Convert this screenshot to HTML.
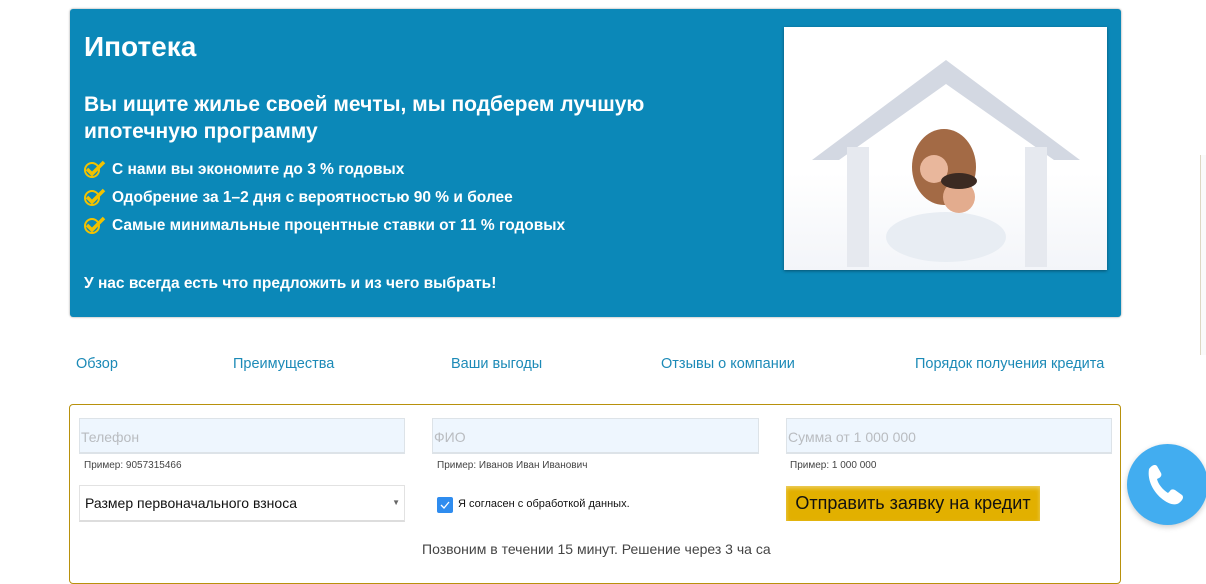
<!DOCTYPE html>
<html><head><meta charset="utf-8"><style>
body{margin:0;width:1206px;height:568px;overflow:hidden;background:#fff;font-family:"Liberation Sans","DejaVu Sans",sans-serif;position:relative}
.a{position:absolute}
.panel{left:70px;top:9px;width:1051px;height:308px;background:#0b88b8;border-radius:3px;box-shadow:0 0 2px #999}
.w{color:#fff;font-weight:bold}
.li{left:84px;font-size:15.5px;color:#fff;font-weight:bold;white-space:nowrap}
.li svg{vertical-align:-4px;margin-right:6px}
.nav{top:356px;font-size:14.5px;color:#1c8ab7}
.inp{height:36px;background:#eef6fe;border:1px solid #dde3e8;border-bottom:2px solid #dde3e8;box-sizing:border-box;color:#b9bcc0;font-size:14px;line-height:36px;padding-left:1px}
.ex{font-size:10px;color:#444}
</style></head><body>
<div class="a panel"></div>
<div class="a w" style="left:84px;top:31px;font-size:28px">Ипотека</div>
<div class="a w" style="left:84px;top:91px;font-size:21px;line-height:27px">Вы ищите жилье своей мечты, мы подберем лучшую<br>ипотечную программу</div>
<div class="a li" style="top:160px"><svg width="22" height="18" viewBox="0 0 22 18"><circle cx="8" cy="10" r="7" fill="none" stroke="#f2c200" stroke-width="2"/><path d="M3 9l5 5L20 2" fill="none" stroke="#f2c200" stroke-width="3.5"/></svg>С нами вы экономите до 3 % годовых</div>
<div class="a li" style="top:188px"><svg width="22" height="18" viewBox="0 0 22 18"><circle cx="8" cy="10" r="7" fill="none" stroke="#f2c200" stroke-width="2"/><path d="M3 9l5 5L20 2" fill="none" stroke="#f2c200" stroke-width="3.5"/></svg>Одобрение за 1–2 дня с вероятностью 90 % и более</div>
<div class="a li" style="top:216px"><svg width="22" height="18" viewBox="0 0 22 18"><circle cx="8" cy="10" r="7" fill="none" stroke="#f2c200" stroke-width="2"/><path d="M3 9l5 5L20 2" fill="none" stroke="#f2c200" stroke-width="3.5"/></svg>Самые минимальные процентные ставки от 11 % годовых</div>
<div class="a li" style="top:275px">У нас всегда есть что предложить и из чего выбрать!</div>
<div class="a" style="left:784px;top:27px;width:323px;height:243px;background:linear-gradient(#fff 60%,#f3f5f9);box-shadow:0 1px 3px rgba(0,0,0,.4)">
<svg width="323" height="243" viewBox="0 0 323 243"><path d="M28 133L162 33L296 133H270L162 57L55 133Z" fill="#d3d8e2"/><rect x="63" y="120" width="22" height="120" fill="#e6e9ef"/><rect x="241" y="120" width="22" height="120" fill="#e6e9ef"/><ellipse cx="160" cy="140" rx="32" ry="38" fill="#a36a45"/><ellipse cx="162" cy="210" rx="60" ry="25" fill="#e8edf3"/><circle cx="150" cy="142" r="14" fill="#e9b79c"/><circle cx="175" cy="170" r="16" fill="#e3ac8e"/><ellipse cx="175" cy="154" rx="18" ry="8" fill="#3b2a22"/></svg></div>
<div class="a" style="left:1200px;top:155px;width:6px;height:200px;border-left:1px solid #ddd8c4;background:#fafafa"></div>
<div class="a nav" style="left:76px">Обзор</div>
<div class="a nav" style="left:233px">Преимущества</div>
<div class="a nav" style="left:451px">Ваши выгоды</div>
<div class="a nav" style="left:661px">Отзывы о компании</div>
<div class="a nav" style="left:915px">Порядок получения кредита</div>
<div class="a" style="left:69px;top:404px;width:1052px;height:180px;border:1px solid #b8910c;border-radius:4px;box-sizing:border-box"></div>
<div class="a inp" style="left:79px;top:418px;width:326px">Телефон</div>
<div class="a inp" style="left:432px;top:418px;width:327px">ФИО</div>
<div class="a inp" style="left:786px;top:418px;width:326px">Сумма от 1 000 000</div>
<div class="a ex" style="left:84px;top:460px">Пример: 9057315466</div>
<div class="a ex" style="left:437px;top:460px">Пример: Иванов Иван Иванович</div>
<div class="a ex" style="left:790px;top:460px">Пример: 1 000 000</div>
<div class="a" style="left:79px;top:485px;width:326px;height:37px;border:1px solid #e2e2e2;border-bottom:2px solid #ddd;box-sizing:border-box;font-size:14px;line-height:34px;padding-left:5px;color:#111">Размер первоначального взноса<span style="position:absolute;right:4px;top:0;font-size:8px;color:#666">▼</span></div>
<div class="a" style="left:437px;top:497px;width:16px;height:16px;background:#2f8cef;border-radius:2px"><svg width="16" height="16"><path d="M4 8l3 3 5-6" fill="none" stroke="#fff" stroke-width="1.3"/></svg></div>
<div class="a" style="left:458px;top:498px;font-size:11px;color:#111">Я согласен с обработкой данных.</div>
<div class="a" style="left:786px;top:486px;width:254px;height:35px;background:#e2b000;box-shadow:inset 0 2px 4px rgba(255,255,255,.4);font-size:18px;line-height:35px;text-align:center;color:#111">Отправить заявку на кредит</div>
<div class="a" style="left:422px;top:541px;font-size:14px;color:#444">Позвоним в течении 15 минут. Решение через 3 ча са</div>
<div class="a" style="left:1127px;top:444px;width:81px;height:81px;border-radius:50%;background:#42adf0;box-shadow:0 2px 6px rgba(0,0,0,.2)">
<svg width="81" height="81" viewBox="0 0 81 81"><path d="M22 25c3-4 6-5 8-3l4 7c1 2 0 4-2 5l-2 1c1 5 6 11 11 14l2-2c1-2 3-2 5-1l7 5c2 2 1 5-3 8-4 3-11 1-18-5s-14-17-12-29z" fill="#fff"/></svg></div>
</body></html>
